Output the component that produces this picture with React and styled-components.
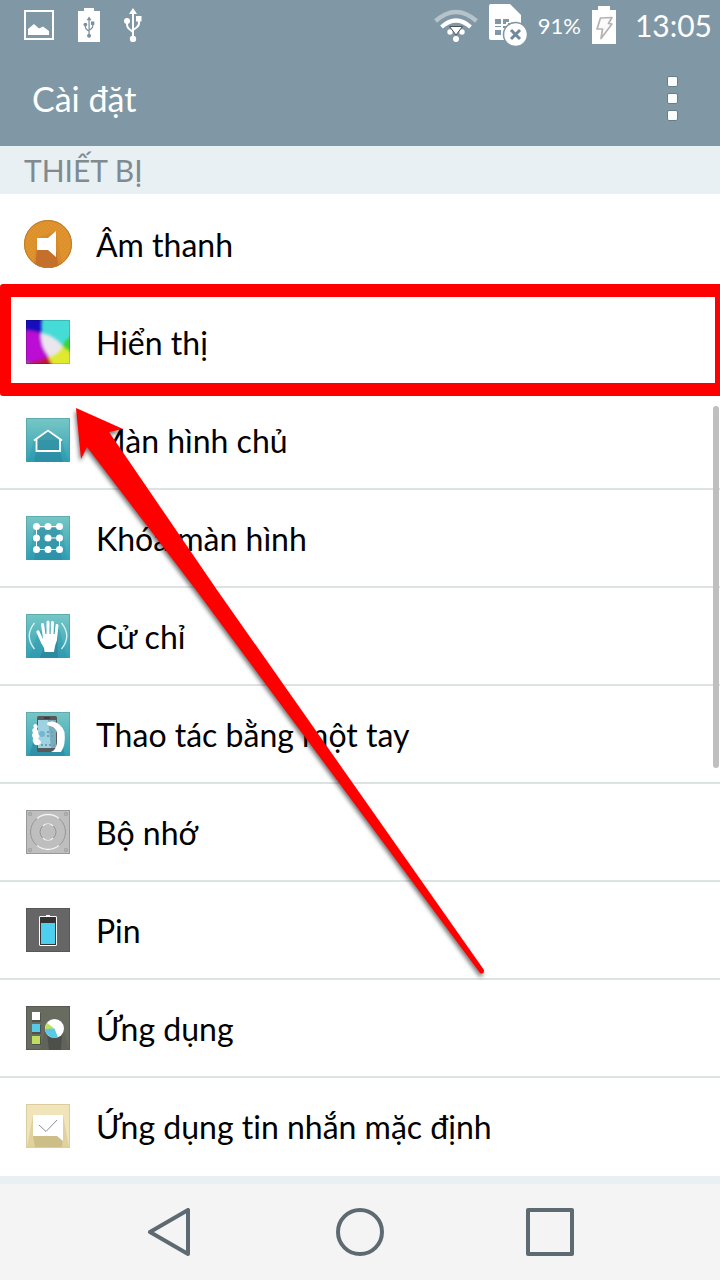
import React from 'react'
import styled, { createGlobalStyle } from 'styled-components'

const GlobalStyle = createGlobalStyle`
  * {
    box-sizing: border-box;
  }

  body {
    margin: 0;
    background: #e8f0f3;
    font-family: Lato, "Open Sans", sans-serif;
    font-variant-ligatures: none;
  }

  button {
    margin: 0;
    padding: 0;
    border: 0;
    background: none;
    color: inherit;
    font: inherit;
    cursor: pointer;
  }

  svg {
    display: block;
    flex-shrink: 0;
  }
`

const Screen = styled.div`
  display: flex;
  flex-direction: column;
  min-height: 100vh;
`

const Header = styled.header`
  background: #8097a5;
  color: #fff;
`

const StatusBar = styled.div`
  display: flex;
  justify-content: space-between;
  align-items: center;
  height: 50px;
  padding: 0 8px 0 24px;
`

const StatusGroup = styled.div`
  display: flex;
  align-items: center;
  gap: ${props => props.$gap};
`

const BatteryLevel = styled.span`
  font-size: 22px;
`

const Clock = styled.time`
  margin-left: 8px;
  font-size: 30px;
`

const AppBar = styled.div`
  display: flex;
  justify-content: space-between;
  align-items: center;
  height: 96px;
  padding: 0 32px;
`

const Title = styled.h1`
  margin: 0;
  font-size: 34px;
  font-weight: 400;
`

const MenuButton = styled.button`
  display: flex;
  flex-direction: column;
  align-items: center;
  gap: 6px;
  width: 32px;
`

const MenuDot = styled.span`
  width: 11px;
  height: 11px;
  border: 1px solid #687e8b;
  border-radius: 2px;
  background: #fcfcfc;
`

const SectionTitle = styled.h2`
  margin: 0;
  padding: 0 24px;
  background: #e8f0f3;
  color: #7f8b90;
  font-size: 30px;
  font-weight: 400;
  line-height: 48px;
`

const Content = styled.main`
  position: relative;
  flex: 1;
`

const List = styled.ul`
  margin: 0;
  padding: 0 0 2px;
  background: #fff;
  list-style: none;
`

const Item = styled.li`
  position: relative;
  border-top: 2px solid #dde2e3;

  &:first-child {
    border-color: #fff;
  }
`

const ItemButton = styled.button`
  display: flex;
  align-items: center;
  gap: 24px;
  width: 100%;
  height: 96px;
  padding: 0 24px;
  color: #000;
  font-size: 32px;
  text-align: left;
`

const IconBox = styled.span`
  display: flex;
  justify-content: center;
  width: 48px;
`

const Highlight = styled.span`
  position: absolute;
  inset: -10px 0 -6px;
  z-index: 1;
  border: 13px solid #fe0000;
  border-left-width: 11px;
  border-right-width: 5px;
  border-radius: 3px 0 0 3px;
  pointer-events: none;
`

const ArrowMark = styled.svg`
  position: absolute;
  top: 254px;
  left: 66px;
  z-index: 2;
  pointer-events: none;
  filter: drop-shadow(-1px 3px 2px rgba(0, 0, 0, 0.55));
`

const ScrollThumb = styled.span`
  position: absolute;
  top: 260px;
  right: 1px;
  width: 6px;
  height: 362px;
  border-radius: 3px;
  background: #bfbfbf;
`

const NavBar = styled.nav`
  display: flex;
  justify-content: center;
  align-items: center;
  gap: 142px;
  height: 96px;
  margin-top: 8px;
  background: #f4f4f4;
  color: #5d6a72;
`

const PictureIcon = () => (
  <svg width="30" height="30" viewBox="0 0 30 30">
    <rect x="1" y="1" width="28" height="28" fill="none" stroke="#fff" strokeWidth="2" />
    <path d="M4 25V19L10 14L15 18.500L19 16.500L25 21V25Z" fill="#fff" />
  </svg>
)

const Trident = ({ color }) => (
  <g fill="none" stroke={color} strokeWidth="2">
    <path d="M9 5V29M3 12V16Q3 20 6.500 22L9 24M15 10V15Q15 18 12 20L9 22" />
    <path d="M9 0L13 6H5Z" fill={color} stroke="none" />
    <circle cx="3" cy="13" r="3" fill={color} stroke="none" />
    <rect x="12" y="8" width="5.500" height="5.500" fill={color} stroke="none" />
    <circle cx="9" cy="31" r="3.200" fill={color} stroke="none" />
  </g>
)

const UsbIcon = () => (
  <svg width="18" height="34" viewBox="0 0 18 34">
    <Trident color="#fff" />
  </svg>
)

const UsbBatteryIcon = () => (
  <svg width="22" height="34" viewBox="0 0 22 34">
    <path d="M6 0H16V3H22V34H0V3H6Z" fill="#fff" />
    <g transform="translate(5.500 8.500) scale(.62)">
      <Trident color="#7990a0" />
    </g>
  </svg>
)

const WifiIcon = () => (
  <svg width="44" height="34" viewBox="0 0 44 34">
    <g fill="none" stroke="#fff">
      <path d="M1.500 13Q22 -5 42.500 13" stroke="#b5c3cb" strokeWidth="4.500" />
      <path d="M7.500 19Q22 6 36.500 19" strokeWidth="4.200" />
    </g>
    <circle cx="16" cy="24" r="2.700" fill="#fff" />
    <circle cx="28" cy="24" r="2.700" fill="#fff" />
    <circle cx="22" cy="31" r="3" fill="#fff" />
    <path d="M15.500 18.500H28.500L22 27Z" fill="#fff" stroke="#4a5357" />
  </svg>
)

const SimIcon = () => (
  <svg width="38" height="42" viewBox="0 0 38 42">
    <path d="M2 0H21L32 11V36H2Q0 36 0 34V2Q0 0 2 0Z" fill="#fff" />
    <path
      d="M6 15H12V20H6ZM14 15H20V18H17V20H14ZM22 15V20H19V19H22ZM6 26H12V31H6ZM6 22H12V23H6ZM14 22H19V24H14Z"
      fill="#8097a5"
    />
    <circle cx="26.500" cy="30.500" r="12" fill="#fff" stroke="#8097a5" strokeWidth="1.500" />
    <path d="M22 26L31 35M31 26L22 35" stroke="#70899a" strokeWidth="3" />
  </svg>
)

const ChargingIcon = () => (
  <svg width="24" height="38" viewBox="0 0 24 38">
    <path d="M6 0H18V4H24V38H0V4H6Z" fill="#fff" />
    <path
      d="M8.500 12L20 11.500L16.500 17.500L20 18L9 32.500L10.500 23H5Z"
      fill="#fafafa"
      stroke="#b3b3b3"
      strokeWidth="1.700"
      strokeLinejoin="round"
    />
  </svg>
)

const SoundIcon = () => (
  <svg width="48" height="48" viewBox="0 0 48 48">
    <defs>
      <pattern id="soundDots" width="4" height="4" patternUnits="userSpaceOnUse">
        <circle cx="1" cy="1" r=".6" fill="#c98526" />
        <circle cx="3" cy="3" r=".6" fill="#c98526" />
      </pattern>
      <clipPath id="soundClip">
        <circle cx="24" cy="24" r="24" />
      </clipPath>
    </defs>
    <g clipPath="url(#soundClip)">
      <rect width="48" height="48" fill="#e0942d" />
      <path d="M13 18L9 48H39L32 11Z" fill="#d78a2b" />
      <rect width="48" height="48" fill="url(#soundDots)" />
      <path d="M13 30L11 48H35L32 30Z" fill="#c56f2d" />
    </g>
    <circle cx="24" cy="24" r="23.500" fill="none" stroke="#bd7b2b" />
    <path d="M13 18H24L32 11V37L24 30H13Z" fill="#fff" />
  </svg>
)

const DisplayIcon = () => (
  <svg width="44" height="44" viewBox="0 0 44 44">
    <defs>
      <filter id="soften" x="-20%" y="-20%" width="140%" height="140%">
        <feGaussianBlur stdDeviation="1.500" />
      </filter>
      <clipPath id="displayClip">
        <rect width="44" height="44" />
      </clipPath>
    </defs>
    <g clipPath="url(#displayClip)">
      <rect width="44" height="44" fill="#45dcd8" />
      <g filter="url(#soften)">
        <path d="M-8 -8H17Q14 5 16 14L-8 14Z" fill="#1608bd" />
        <path d="M-8 11Q6 9 16 14Q16 28 24 37L18 42H-8Z" fill="#bb0bd3" />
        <path d="M-8 44Q10 43 23 36L32 52H-8Z" fill="#bd1238" />
        <path d="M35 26L52 8V40Z" fill="#35d535" />
        <path d="M22 37Q31 34 36 26L52 38V52H30Z" fill="#dfe92d" />
        <path d="M15 13Q28 15 37 26Q32 34 23 37Q14 26 15 13Z" fill="#ebe5ed" />
      </g>
    </g>
    <rect x=".5" y=".5" width="43" height="43" fill="none" stroke="#000" strokeOpacity=".15" />
  </svg>
)

const TealTile = ({ id, children }) => (
  <svg width="44" height="44" viewBox="0 0 44 44">
    <defs>
      <linearGradient id={id} x1="0" y1="0" x2="0" y2="1">
        <stop offset="0" stopColor="#78c7c5" />
        <stop offset="1" stopColor="#30a0b5" />
      </linearGradient>
    </defs>
    <rect width="44" height="44" fill={`url(#${id})`} />
    <rect x=".5" y=".5" width="43" height="43" fill="none" stroke="#4d9da2" strokeOpacity=".6" />
    {children}
  </svg>
)

const HomeIcon = () => (
  <TealTile id="homeTile">
    <path d="M8 22L2 44H42L36 22Z" fill="#2994ab" opacity=".35" />
    <path d="M22 12L10 21V33L8 44H37L34 33V21Z" fill="#28839a" opacity=".5" />
    <path d="M8 22.500L22 12.500L36 22.500M10.500 21V33H34V21" fill="none" stroke="#fff" strokeWidth="1.800" />
  </TealTile>
)

const dots = [10.5, 22, 33.5]

const LockIcon = () => (
  <TealTile id="lockTile">
    <path d="M8 12L3 44H41L36 12Z" fill="#2994ab" opacity=".35" />
    <path d="M10 12V33L8 44H36L34 33V12Z" fill="#28839a" opacity=".4" />
    <path d="M22 22H33.500V33.500H10.500V10.500H33.500" fill="none" stroke="#fff" />
    {dots.map(y => dots.map(x => (
      <circle key={`${x}-${y}`} cx={x} cy={y} r="3.500" fill="#fff" />
    )))}
  </TealTile>
)

const HandIcon = () => (
  <TealTile id="handTile">
    <path d="M12 18L3 44H41L32 10Z" fill="#2c91a8" opacity=".35" />
    <path d="M19 30L14 44H32L31 12Z" fill="#28788f" opacity=".5" />
    <path d="M8.500 9Q-2 22 8.500 35M35.500 9Q46 22 35.500 35" fill="none" stroke="#d9f2f2" strokeWidth="1.300" />
    <g stroke="#fff" strokeLinecap="round" fill="none">
      <path d="M16.500 10.500L18.500 24M22 8V23M26.500 8.500L26 24M31 11.500L29.500 25" strokeWidth="3" />
      <path d="M12 18L17 29" strokeWidth="3.200" />
    </g>
    <path d="M17 20H30.500L31 26L29 32L28 38H18.500L18 34L15 28L14.500 24L17 25Z" fill="#fff" />
  </TealTile>
)

const OneHandIcon = () => (
  <TealTile id="oneHandTile">
    <path d="M7 30L3 44H39L36 30Z" fill="#287f96" opacity=".5" />
    <rect x="11" y="4" width="20" height="36" rx="1.500" fill="#59595b" />
    <rect x="12" y="8" width="18" height="28" fill="#9ed2e0" />
    <path d="M22 8H30V36H25Z" fill="#79adbd" />
    <path d="M18 6H24" stroke="#222" />
    <circle cx="16" cy="22" r="3" fill="#72b8d2" />
    <path d="M21 20H29M21 24H29M15 33H29" stroke="#6da4b5" strokeWidth="2" strokeDasharray="2 2" />
    <path d="M35 40H25Q30 38 31 31V21Q30 16 26 14.500Q21 13.500 21 11.500Q22 9 27 9.500Q36 12 38.500 20Q40 33 35 40Z" fill="#fff" />
    <path d="M10 12Q6 12 8 16Q5 17 7 21Q5 23 7 26Q6 29 8 32Q12 35 15 31Q15 28 12 27Q15 24 12 22Q13 19 11 17Q13 14 10 12Z" fill="#fff" />
  </TealTile>
)

const StorageIcon = () => (
  <svg width="44" height="44" viewBox="0 0 44 44">
    <rect x=".5" y=".5" width="43" height="43" fill="#bebebe" stroke="#999" />
    <g fill="#aeb6ba" stroke="#969ea2" strokeWidth=".8">
      <circle cx="4" cy="4" r="1.700" />
      <circle cx="40" cy="4" r="1.700" />
      <circle cx="4" cy="40" r="1.700" />
      <circle cx="40" cy="40" r="1.700" />
    </g>
    <g fill="none" stroke="#979797">
      <circle cx="22" cy="22" r="17.500" />
      <circle cx="22" cy="22" r="8" />
    </g>
    <g fill="none" stroke="#f4f4f4" strokeWidth="1.300">
      <path d="M11 8.400A17.500 17.500 0 0 1 33 8.400M11 35.600A17.500 17.500 0 0 0 33 35.600" />
      <path d="M17 15.700A8 8 0 0 1 27 15.700M17 28.300A8 8 0 0 0 27 28.300" />
    </g>
  </svg>
)

const BatteryIcon = () => (
  <svg width="44" height="44" viewBox="0 0 44 44">
    <rect x=".5" y=".5" width="43" height="43" fill="#666" stroke="#585858" />
    <rect x="20" y="7" width="4" height="2" fill="#fff" />
    <rect x="13.500" y="8.500" width="17" height="29" rx=".5" fill="#333" stroke="#fff" />
    <rect x="15" y="15" width="14" height="21" fill="#4fcff0" />
  </svg>
)

const AppsIcon = () => (
  <svg width="44" height="44" viewBox="0 0 44 44">
    <rect x=".5" y=".5" width="43" height="43" fill="#686b60" stroke="#56594f" />
    <path d="M19 24L14 44H43L38 24Z" fill="#60635a" />
    <path d="M21 28L23 44H35L36 28Z" fill="#4d5048" />
    <rect x="6" y="7" width="9" height="9" fill="#50534b" />
    <rect x="6" y="19" width="9" height="9" fill="#50534b" />
    <rect x="6" y="31" width="9" height="8" fill="#50534b" />
    <rect x="6" y="6" width="8" height="8" fill="#fff" />
    <rect x="6" y="18" width="8" height="8" fill="#5bc9e5" />
    <rect x="6" y="30" width="8" height="8" fill="#bfdd5f" />
    <circle cx="28.500" cy="22.500" r="9.500" fill="#fff" />
    <path d="M28.500 22.500L19.100 24A9.500 9.500 0 0 1 21 17Z" fill="#bfdd5f" />
    <path d="M28.500 22.500L32 31.300A9.500 9.500 0 0 1 19.100 23Z" fill="#5bc9e5" />
  </svg>
)

const MailIcon = () => (
  <svg width="44" height="44" viewBox="0 0 44 44">
    <rect x=".5" y=".5" width="43" height="43" fill="#f0e4b8" stroke="#dccda0" />
    <path d="M7 11L1 43H43L37 11Z" fill="#e0d19d" />
    <path d="M7 32L9 43H36L37 32Z" fill="#cdbd87" />
    <path d="M7 11H37V37L31 32H7Z" fill="#fff" />
    <path d="M13 21L20 27.500L31 16" fill="none" stroke="#8c8c99" />
  </svg>
)

const items = [
  { title: 'Âm thanh', icon: SoundIcon },
  { title: 'Hiển thị', icon: DisplayIcon, highlighted: true },
  { title: 'Màn hình chủ', icon: HomeIcon },
  { title: 'Khóa màn hình', icon: LockIcon },
  { title: 'Cử chỉ', icon: HandIcon },
  { title: 'Thao tác bằng một tay', icon: OneHandIcon },
  { title: 'Bộ nhớ', icon: StorageIcon },
  { title: 'Pin', icon: BatteryIcon },
  { title: 'Ứng dụng', icon: AppsIcon },
  { title: 'Ứng dụng tin nhắn mặc định', icon: MailIcon },
]

const SettingsItem = ({ title, icon: Icon, highlighted }) => (
  <Item>
    <ItemButton type="button">
      <IconBox><Icon /></IconBox>
      {title}
    </ItemButton>
    {highlighted && <Highlight />}
  </Item>
)

const App = () => (
  <Screen>
    <GlobalStyle />
    <Header>
      <StatusBar>
        <StatusGroup $gap="24px">
          <PictureIcon />
          <UsbBatteryIcon />
          <UsbIcon />
        </StatusGroup>
        <StatusGroup $gap="11px">
          <WifiIcon />
          <SimIcon />
          <BatteryLevel>91%</BatteryLevel>
          <ChargingIcon />
          <Clock>13:05</Clock>
        </StatusGroup>
      </StatusBar>
      <AppBar>
        <Title>Cài đặt</Title>
        <MenuButton type="button" aria-label="Menu">
          <MenuDot />
          <MenuDot />
          <MenuDot />
        </MenuButton>
      </AppBar>
    </Header>
    <Content>
      <SectionTitle>THIẾT BỊ</SectionTitle>
      <List>
        {items.map(item => (
          <SettingsItem key={item.title} {...item} />
        ))}
      </List>
      <ScrollThumb />
      <ArrowMark width="430" height="590" viewBox="0 0 430 590">
        <path
          d="M10 8L57 29L43 32L151 190L418 570Q418 575 414 573L130 190L21 47L15 59Z"
          fill="#fe0000"
        />
      </ArrowMark>
    </Content>
    <NavBar>
      <button type="button" aria-label="Back">
        <svg width="48" height="48" viewBox="0 0 48 48">
          <path d="M42 2V46L4 24Z" fill="none" stroke="currentColor" strokeWidth="4" strokeLinejoin="round" />
        </svg>
      </button>
      <button type="button" aria-label="Home">
        <svg width="48" height="48" viewBox="0 0 48 48">
          <circle cx="24" cy="24" r="22" fill="none" stroke="currentColor" strokeWidth="4" />
        </svg>
      </button>
      <button type="button" aria-label="Recent apps">
        <svg width="48" height="48" viewBox="0 0 48 48">
          <rect x="2" y="2" width="44" height="44" fill="none" stroke="currentColor" strokeWidth="4" strokeLinejoin="round" />
        </svg>
      </button>
    </NavBar>
  </Screen>
)

export default App
